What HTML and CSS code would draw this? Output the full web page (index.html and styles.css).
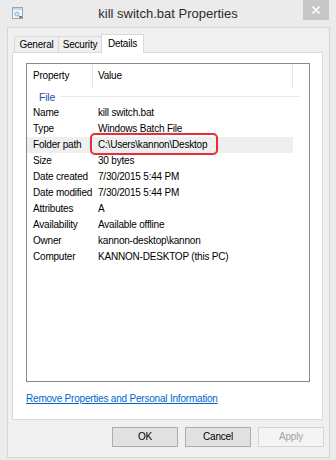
FILE: index.html
```html
<!DOCTYPE html>
<html>
<head>
<meta charset="utf-8">
<link rel="stylesheet" href="styles.css">
</head>
<body>
<div class="window">
  <div class="titlebar">
    <div class="tb-left">
      <svg class="app-icon" width="11" height="12" viewBox="0 0 11 12">
        <rect x="0.5" y="0.5" width="10" height="11" fill="#f4f7fa" stroke="#9aa6b2"/>
        <rect x="1" y="1" width="9" height="2" fill="#c9d6e3"/>
        <circle cx="5" cy="7" r="2.6" fill="#9fc6e6"/>
        <circle cx="5" cy="7" r="1.1" fill="#e9f3fb"/>
        <rect x="7" y="9" width="3" height="2" fill="#6f8496"/>
      </svg>
    </div>
    <div class="title">kill switch.bat Properties</div>
    <div class="tb-right">
      <div class="close">
        <svg width="10" height="10" viewBox="0 0 10 10">
          <path d="M1.5 1.5 L8.5 8.5 M8.5 1.5 L1.5 8.5" stroke="#ffffff" stroke-width="1.6" fill="none"/>
        </svg>
      </div>
    </div>
  </div>
  <div class="client">
    <div class="tabs">
      <div class="tab t-general">General</div>
      <div class="tab t-security">Security</div>
      <div class="tab t-details active">Details</div>
    </div>
    <div class="panel">
      <div class="list">
        <div class="header">
          <div class="hcell hprop">Property</div>
          <div class="hcell hval">Value</div>
          <div class="hcell hrest"></div>
        </div>
        <div class="group"><span class="gname">File</span><div class="gline"></div></div>
        <div class="row"><div class="c1">Name</div><div class="c2">kill switch.bat</div></div>
        <div class="row"><div class="c1">Type</div><div class="c2">Windows Batch File</div></div>
        <div class="row hover"><div class="c1">Folder path</div><div class="c2 marked">C:\Users\kannon\Desktop<span class="redbox"></span></div></div>
        <div class="row"><div class="c1">Size</div><div class="c2">30 bytes</div></div>
        <div class="row"><div class="c1">Date created</div><div class="c2">7/30/2015 5:44 PM</div></div>
        <div class="row"><div class="c1">Date modified</div><div class="c2">7/30/2015 5:44 PM</div></div>
        <div class="row"><div class="c1">Attributes</div><div class="c2">A</div></div>
        <div class="row"><div class="c1">Availability</div><div class="c2">Available offline</div></div>
        <div class="row"><div class="c1">Owner</div><div class="c2">kannon-desktop\kannon</div></div>
        <div class="row"><div class="c1">Computer</div><div class="c2">KANNON-DESKTOP (this PC)</div></div>
      </div>
      <a class="link" href="#">Remove Properties and Personal Information</a>
    </div>
    <div class="buttons">
      <div class="btn">OK</div>
      <div class="btn">Cancel</div>
      <div class="btn disabled">Apply</div>
    </div>
  </div>
</div>
</body>
</html>
```

FILE: styles.css
```css
* { box-sizing: border-box; }
html, body { margin: 0; padding: 0; }
body {
  width: 336px;
  height: 460px;
  overflow: hidden;
  background: #ebebeb;
  font-family: "Liberation Sans", Arial, sans-serif;
  font-size: 10px;
  letter-spacing: -0.2px;
  color: #000;
}
.window {
  width: 336px;
  height: 460px;
  display: flex;
  flex-direction: column;
  background: #ebebeb;
}
.titlebar {
  height: 27px;
  flex: 0 0 27px;
  display: grid;
  grid-template-columns: 1fr auto 1fr;
  align-items: start;
}
.tb-left { padding: 7px 0 0 12px; }
.app-icon { display: block; }
.title {
  font-size: 13px;
  letter-spacing: 0;
  line-height: 28px;
  color: #2b2b2b;
  white-space: nowrap;
}
.tb-right { justify-self: end; padding-right: 7px; }
.close {
  width: 26px;
  height: 20px;
  background: #c7c7c7;
  display: flex;
  align-items: center;
  justify-content: center;
}
.close svg { display: block; }
.client {
  flex: 1;
  margin: 0 6px 2px 7px;
  border: 1px solid #d6d6d6;
  background: #f0f0f0;
  display: flex;
  flex-direction: column;
  padding: 6px 6px 10px 4px;
}
.tabs {
  display: flex;
  align-items: flex-end;
  padding-left: 2px;
  margin-bottom: -1px;
}
.tab {
  height: 17px;
  border: 1px solid #d9d9d9;
  border-bottom: none;
  background: #f0f0f0;
  text-align: center;
  line-height: 16px;
  white-space: nowrap;
}
.t-general { width: 45px; }
.t-security { width: 44px; margin-left: -1px; }
.t-details { width: 43px; margin-left: -1px; }
.tab.active {
  height: 19px;
  background: #ffffff;
  position: relative;
  z-index: 1;
  line-height: 17px;
}
.panel {
  flex: 1;
  border: 1px solid #d9d9d9;
  background: #ffffff;
  padding: 10px 12px 0 13px;
  display: flex;
  flex-direction: column;
}
.list {
  height: 319px;
  border: 1px solid #828790;
  background: #ffffff;
}
.header {
  display: flex;
  height: 24px;
}
.hcell {
  line-height: 23px;
  border-right: 1px solid #e5e5e5;
  white-space: nowrap;
}
.hprop { width: 66px; padding-left: 6px; }
.hval { width: 200px; padding-left: 5px; }
.hrest { flex: 1; border-right: none; }
.group {
  height: 17px;
  display: flex;
  align-items: center;
  padding-left: 12px;
  padding-right: 10px;
}
.gname { color: #1e4fa0; font-size: 10.5px; line-height: 14px; }
.gline {
  flex: 1;
  height: 1px;
  margin-left: 6px;
  background: #dfe8f3;
}
.row {
  display: flex;
  width: 266px;
  height: 16px;
  line-height: 16px;
  white-space: nowrap;
}
.row.hover { background: #efefef; }
.c1 { width: 66px; padding-left: 6px; }
.c2 { width: 200px; padding-left: 5px; }
.marked { position: relative; }
.redbox {
  position: absolute;
  left: -3px;
  top: -4px;
  width: 128px;
  height: 22px;
  border: 2px solid #e2313a;
  border-radius: 5px;
  box-shadow: 0 0 1px rgba(226, 49, 58, 0.4);
}
.link {
  margin-top: 10px;
  line-height: 14px;
  color: #0066cc;
  text-decoration: underline;
  white-space: nowrap;
  align-self: flex-start;
}
.buttons {
  margin-top: 7px;
  margin-right: -1px;
  display: flex;
  justify-content: flex-end;
  gap: 7px;
}
.btn {
  width: 66px;
  height: 20px;
  border: 1px solid #adadad;
  background: #e1e1e1;
  text-align: center;
  line-height: 18px;
}
.btn.disabled {
  background: #f4f4f4;
  border-color: #d5d5d5;
  color: #a3a3a3;
}
```
